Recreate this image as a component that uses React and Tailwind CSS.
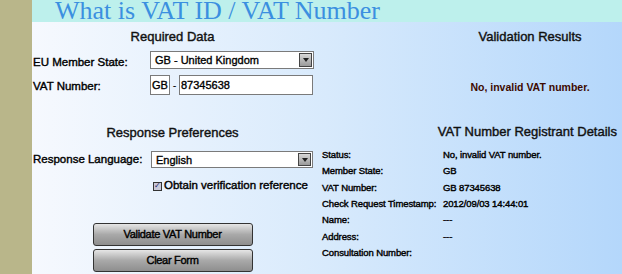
import React from "react";

const SelectBox = ({ value, className }) => (
  <div className={`flex items-stretch bg-white border border-[#7a7a7a] ${className}`}>
    <div className="flex-1 pl-1 text-[11px] leading-[16px] text-black [-webkit-text-stroke:0.35px_black]">{value}</div>
    <div className="w-[13px] m-[1px] bg-gradient-to-b from-[#d8d8d8] to-[#9a9a9a] border border-[#444] flex items-center justify-center">
      <span className="block w-0 h-0 border-l-[3px] border-r-[3px] border-t-[4px] border-l-transparent border-r-transparent border-t-[#222]" />
    </div>
  </div>
);

const Button = ({ children }) => (
  <button className="w-[160px] h-[23px] rounded-[3px] border border-[#333] bg-gradient-to-b from-[#e6e6e6] via-[#a9a9a9] to-[#8e8e8e] text-[11px] text-black tracking-[-0.3px] [-webkit-text-stroke:0.4px_black]">
    {children}
  </button>
);

const details = [
  ["Status:", "No, invalid VAT number."],
  ["Member State:", "GB"],
  ["VAT Number:", "GB 87345638"],
  ["Check Request Timestamp:", "2012/09/03 14:44:01"],
  ["Name:", "---"],
  ["Address:", "---"],
  ["Consultation Number:", ""],
];

export default function App() {
  return (
    <div className="w-[622px] h-[274px] flex overflow-hidden" style={{ fontFamily: '"Liberation Sans", Arial, sans-serif' }}>
      <div className="w-[32px] bg-[#b9b68a]" />
      <div className="flex-1 flex flex-col">
        <div className="h-[22px] overflow-hidden bg-[#bdf0ec] pl-[23px] text-[26px] leading-[22px] text-[#3b8fe0] whitespace-nowrap" style={{ fontFamily: '"Liberation Serif", serif' }}>
          What is VAT ID / VAT Number
        </div>
        <div className="flex-1 flex bg-gradient-to-r from-[#f6f9fe] via-[#d8eafc] to-[#b4d7fb]">
          <div className="w-[290px] pl-[1px] flex flex-col">
            <div className="mt-[7px] text-center text-[13px] leading-[15px] text-[#111] pr-[10px] [-webkit-text-stroke:0.4px_#111]">Required Data</div>
            <div className="mt-[7px] flex items-center h-[18px]">
              <div className="w-[117px] text-[11.5px] text-black pt-[6px] [-webkit-text-stroke:0.4px_black]">EU Member State:</div>
              <SelectBox value="GB - United Kingdom" className="w-[164px] h-[18px]" />
            </div>
            <div className="mt-[6px] flex items-center h-[20px]">
              <div className="w-[117px] text-[11.5px] text-black pt-[4px] [-webkit-text-stroke:0.4px_black]">VAT Number:</div>
              <div className="w-[20px] h-[20px] bg-white border border-[#7a7a7a] text-[11px] leading-[18px] text-center [-webkit-text-stroke:0.35px_black]">GB</div>
              <span className="w-[9px] text-center text-[11px]">-</span>
              <div className="w-[134px] h-[20px] bg-white border border-[#7a7a7a] text-[11px] leading-[18px] pl-[1px] [-webkit-text-stroke:0.35px_black]">87345638</div>
            </div>
            <div className="mt-[30px] text-center text-[13px] leading-[15px] text-[#111] pr-[10px] [-webkit-text-stroke:0.4px_#111]">Response Preferences</div>
            <div className="mt-[11px] flex items-center h-[17px]">
              <div className="w-[118px] text-[11.5px] text-black [-webkit-text-stroke:0.4px_black]">Response Language:</div>
              <SelectBox value="English" className="w-[162px] h-[17px]" />
            </div>
            <div className="mt-[11px] flex items-center pl-[120px] h-[14px]">
              <span className="w-[9px] h-[9px] border border-[#333] bg-[#c9c9d8] flex items-center justify-center text-[8px] leading-none text-[#1a1a6a] mr-[2px]">✓</span>
              <span className="text-[11.5px] text-black whitespace-nowrap [-webkit-text-stroke:0.4px_black]">Obtain verification reference</span>
            </div>
            <div className="mt-[30px] flex flex-col items-center gap-[3px] pr-[10px]">
              <Button>Validate VAT Number</Button>
              <Button>Clear Form</Button>
            </div>
          </div>
          <div className="flex-1 flex flex-col">
            <div className="mt-[7px] text-center text-[13px] leading-[15px] text-[#111] pl-[116px] [-webkit-text-stroke:0.4px_#111]">Validation Results</div>
            <div className="mt-[37px] text-center text-[10.5px] leading-[12px] font-bold text-[#3d0a00] pl-[116px]">No, invalid VAT number.</div>
            <div className="mt-[31px] text-right text-[13px] leading-[15px] text-[#111] pr-[5px] whitespace-nowrap [-webkit-text-stroke:0.4px_#111]">VAT Number Registrant Details</div>
            <div className="mt-[8px] flex flex-col">
              {details.map(([k, v]) => (
                <div key={k} className="flex h-[16.3px] items-center text-[9.5px] tracking-[-0.1px] text-black whitespace-nowrap [-webkit-text-stroke:0.4px_black]">
                  <div className="w-[121px] shrink-0">{k}</div>
                  <div>{v}</div>
                </div>
              ))}
            </div>
          </div>
        </div>
      </div>
    </div>
  );
}
